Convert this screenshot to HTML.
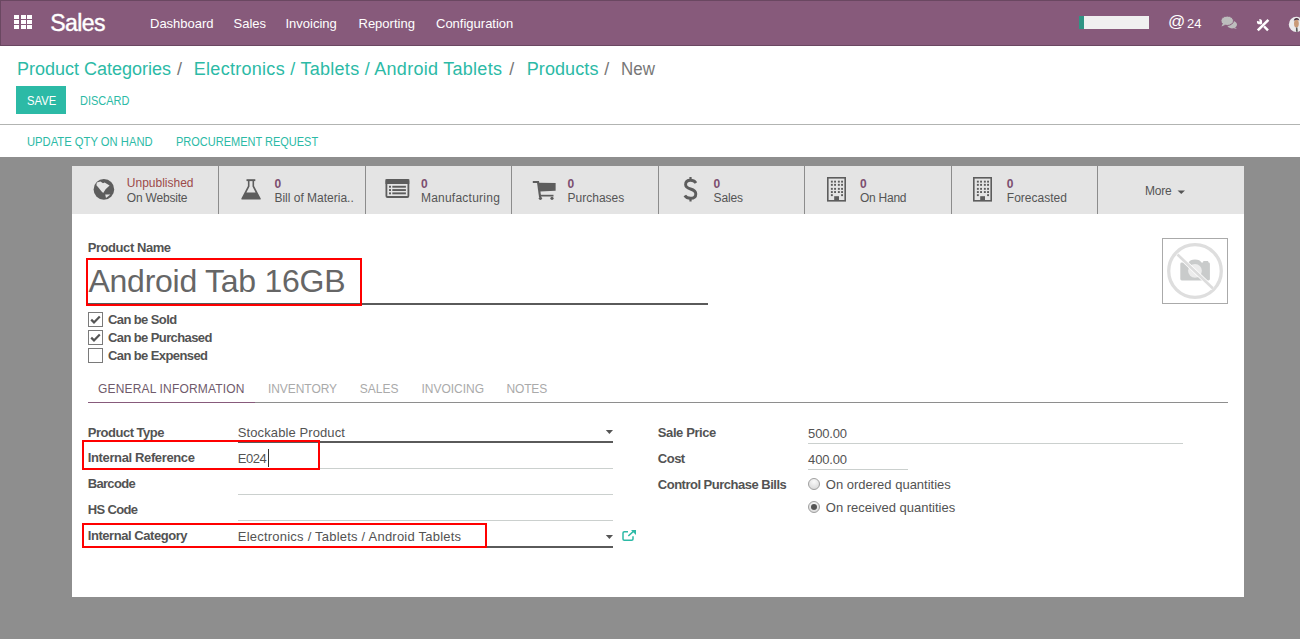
<!DOCTYPE html>
<html><head><meta charset="utf-8">
<style>
*{margin:0;padding:0;box-sizing:border-box}
html,body{width:1300px;height:639px;overflow:hidden;background:#8e8e8e;font-family:"Liberation Sans",sans-serif;color:#4c4c4c;position:relative}
.a{position:absolute;white-space:nowrap}
svg.a{overflow:visible}
</style></head><body>
<div class="a" style="left:0px;top:0px;width:1300px;height:46px;background:#875a7b;border:1px solid #6a4761;border-right:none"></div>
<div class="a" style="left:14.0px;top:15px;width:5px;height:4px;background:#fff;"></div>
<div class="a" style="left:14.0px;top:20px;width:5px;height:4px;background:#fff;"></div>
<div class="a" style="left:14.0px;top:25px;width:5px;height:4px;background:#fff;"></div>
<div class="a" style="left:20.5px;top:15px;width:5px;height:4px;background:#fff;"></div>
<div class="a" style="left:20.5px;top:20px;width:5px;height:4px;background:#fff;"></div>
<div class="a" style="left:20.5px;top:25px;width:5px;height:4px;background:#fff;"></div>
<div class="a" style="left:27.0px;top:15px;width:5px;height:4px;background:#fff;"></div>
<div class="a" style="left:27.0px;top:20px;width:5px;height:4px;background:#fff;"></div>
<div class="a" style="left:27.0px;top:25px;width:5px;height:4px;background:#fff;"></div>
<div class="a" style="left:50.3px;top:12px;font-size:23px;line-height:23px;color:#fff;letter-spacing:-0.6px;-webkit-text-stroke:0.4px #fff;">Sales</div>
<div class="a" style="left:150px;top:17px;font-size:13px;line-height:13px;color:#fff;">Dashboard</div>
<div class="a" style="left:233.5px;top:17px;font-size:13px;line-height:13px;color:#fff;">Sales</div>
<div class="a" style="left:285.5px;top:17px;font-size:13px;line-height:13px;color:#fff;">Invoicing</div>
<div class="a" style="left:358.5px;top:17px;font-size:13px;line-height:13px;color:#fff;">Reporting</div>
<div class="a" style="left:436px;top:17px;font-size:13px;line-height:13px;color:#fff;">Configuration</div>
<div class="a" style="left:1079px;top:16px;width:70px;height:13px;background:#f0f0f0;"></div>
<div class="a" style="left:1079px;top:16px;width:5px;height:13px;background:#2f9484;"></div>

<div class="a" style="left:1168px;top:13px;font-size:17px;line-height:17px;color:#fff">@</div>
<svg class="a" style="left:0;top:0" width="1300" height="46">
 <g fill="#bdbdbd">
  <ellipse cx="1232" cy="24.6" rx="5" ry="3.8"/>
  <path d="M1234.5 27 L1237 29 L1233 28 Z"/>
 </g>
 <g fill="#bdbdbd" stroke="#875a7b" stroke-width="1">
  <ellipse cx="1227.2" cy="20.8" rx="6.3" ry="4.7"/>
 </g>
 <path d="M1222.8 23.5 L1221.5 26.5 L1225.5 24.8 Z" fill="#bdbdbd"/>
 <circle cx="1259.5" cy="21.7" r="2.6" fill="#fff"/>
 <path d="M1259.6 21.8 L1257.0 20.2 L1258.6 18.6 Z" fill="#875a7b"/>
 <circle cx="1258.2" cy="20.0" r="1.25" fill="#875a7b"/>
 <path d="M1259.8 22 L1268 30.3" stroke="#fff" stroke-width="2.4"/>
 <path d="M1261.6 26.4 L1264.2 23.8" stroke="#875a7b" stroke-width="3.4"/>
 <path d="M1257.8 30.3 L1268.4 19.8" stroke="#fff" stroke-width="2.6"/>
 <circle cx="1296.4" cy="24.4" r="7.6" fill="#ebeaec"/>
 <ellipse cx="1296.4" cy="23.6" rx="2.4" ry="3.9" fill="#c99a78"/>
 <path d="M1293.8 21.2 Q1294 18 1296.6 18 Q1299.2 18 1299.2 21 L1298.4 20 Q1296.5 19.4 1294.6 20.2 Z" fill="#4e3444"/>
 <path d="M1295.9 27.4 L1297.4 27.4 L1297.8 31.8 L1296 31.8 Z" fill="#5a5a5a"/>
</svg>

<div class="a" style="left:1187px;top:17px;font-size:13px;line-height:13px;color:#fff;">24</div>
<div class="a" style="left:0px;top:46px;width:1300px;height:111px;background:#fff;"></div>
<div class="a" style="left:17px;top:60px;font-size:18px;line-height:18px;color:#2cbaa6;">Product Categories</div>
<div class="a" style="left:177px;top:60px;font-size:18px;line-height:18px;color:#777;">/</div>
<div class="a" style="left:193.8px;top:60px;font-size:18px;line-height:18px;color:#2cbaa6;letter-spacing:0.28px;">Electronics / Tablets / Android Tablets</div>
<div class="a" style="left:509.2px;top:60px;font-size:18px;line-height:18px;color:#777;">/</div>
<div class="a" style="left:526.7px;top:60px;font-size:18px;line-height:18px;color:#2cbaa6;letter-spacing:0.1px;">Products</div>
<div class="a" style="left:604.2px;top:60px;font-size:18px;line-height:18px;color:#777;">/</div>
<div class="a" style="left:620.6px;top:60px;font-size:18px;line-height:18px;color:#777;transform:scaleX(0.94);transform-origin:0 0;">New</div>
<div class="a" style="left:16px;top:86px;width:50px;height:28px;background:#2cbaa6;"></div>
<div class="a" style="left:26.5px;top:94px;font-size:13px;line-height:13px;color:#fff;transform:scaleX(0.866);transform-origin:0 0;">SAVE</div>
<div class="a" style="left:79.5px;top:94px;font-size:13px;line-height:13px;color:#2cbaa6;transform:scaleX(0.846);transform-origin:0 0;">DISCARD</div>
<div class="a" style="left:0px;top:124px;width:1300px;height:1px;background:#b2b4b2;"></div>
<div class="a" style="left:26.5px;top:135px;font-size:13px;line-height:13px;color:#2cbaa6;transform:scaleX(0.864);transform-origin:0 0;">UPDATE QTY ON HAND</div>
<div class="a" style="left:176.2px;top:135px;font-size:13px;line-height:13px;color:#2cbaa6;transform:scaleX(0.846);transform-origin:0 0;">PROCUREMENT REQUEST</div>
<div class="a" style="left:72px;top:166px;width:1172px;height:431px;background:#fff;"></div>
<div class="a" style="left:72px;top:166px;width:1172px;height:48px;background:#e4e4e4;"></div>
<div class="a" style="left:218px;top:166px;width:1px;height:48px;background:#8c8c8c;"></div>
<div class="a" style="left:365px;top:166px;width:1px;height:48px;background:#8c8c8c;"></div>
<div class="a" style="left:511px;top:166px;width:1px;height:48px;background:#8c8c8c;"></div>
<div class="a" style="left:658px;top:166px;width:1px;height:48px;background:#8c8c8c;"></div>
<div class="a" style="left:804px;top:166px;width:1px;height:48px;background:#8c8c8c;"></div>
<div class="a" style="left:951px;top:166px;width:1px;height:48px;background:#8c8c8c;"></div>
<div class="a" style="left:1097px;top:166px;width:1px;height:48px;background:#8c8c8c;"></div>
<div class="a" style="left:126.8px;top:177px;font-size:12px;line-height:12px;color:#9c4a4a;">Unpublished</div>
<div class="a" style="left:126.8px;top:192px;font-size:12px;line-height:12px;color:#555;letter-spacing:-0.2px;">On Website</div>
<div class="a" style="left:274.4px;top:178px;font-size:12px;line-height:12px;color:#7c4f70;font-weight:bold;">0</div>
<div class="a" style="left:274.4px;top:192px;font-size:12px;line-height:12px;color:#555;">Bill of Materia..</div>
<div class="a" style="left:420.9px;top:178px;font-size:12px;line-height:12px;color:#7c4f70;font-weight:bold;">0</div>
<div class="a" style="left:420.9px;top:192px;font-size:12px;line-height:12px;color:#555;letter-spacing:0.24px;">Manufacturing</div>
<div class="a" style="left:567.6px;top:178px;font-size:12px;line-height:12px;color:#7c4f70;font-weight:bold;">0</div>
<div class="a" style="left:567.6px;top:192px;font-size:12px;line-height:12px;color:#555;">Purchases</div>
<div class="a" style="left:713.5px;top:178px;font-size:12px;line-height:12px;color:#7c4f70;font-weight:bold;">0</div>
<div class="a" style="left:713.5px;top:192px;font-size:12px;line-height:12px;color:#555;letter-spacing:-0.1px;">Sales</div>
<div class="a" style="left:860px;top:178px;font-size:12px;line-height:12px;color:#7c4f70;font-weight:bold;">0</div>
<div class="a" style="left:860px;top:192px;font-size:12px;line-height:12px;color:#555;letter-spacing:-0.25px;">On Hand</div>
<div class="a" style="left:1006.8px;top:178px;font-size:12px;line-height:12px;color:#7c4f70;font-weight:bold;">0</div>
<div class="a" style="left:1006.8px;top:192px;font-size:12px;line-height:12px;color:#555;">Forecasted</div>
<div class="a" style="left:1145px;top:185px;font-size:12px;line-height:12px;color:#555;letter-spacing:-0.25px;">More</div>

<svg class="a" style="left:0;top:0" width="1300" height="220">
 <g fill="#5d5d5d">
  <!-- globe -->
  <circle cx="103.9" cy="189.4" r="10.3"/>
 </g>
 <path d="M96.8 182.6 L100.5 181.4 L103 183.2 L104.6 182.6 L109.6 185.6 L105.6 189.2 L103.2 193 L101.6 191.6 L98.4 187.6 L96.4 185.2 Z" fill="#e4e4e4"/>
 <path d="M105.2 194.4 L110.4 194.6 L106 197.9 Z" fill="#e4e4e4"/>
 <!-- flask -->
 <g fill="#5d5d5d">
  <rect x="246.5" y="179.2" width="8.8" height="1.9"/>
  <path d="M247.9 181 L247.9 186 L241.5 198.3 Q241 199.6 242.4 199.6 L259.8 199.6 Q261.2 199.6 260.6 198.3 L254.1 186 L254.1 181 L252.5 181 L252.5 186.4 L255.6 192.6 L246.4 192.6 L249.5 186.4 L249.5 181 Z"/>
 </g>
 <!-- list-alt -->
 <rect x="386.4" y="180" width="22" height="17" rx="1" fill="none" stroke="#5d5d5d" stroke-width="1.8"/>
 <rect x="385.5" y="179.2" width="23.8" height="4.8" fill="#5d5d5d"/>
 <g fill="#5d5d5d">
  <rect x="389" y="185.8" width="2" height="1.9"/><rect x="392.3" y="185.8" width="13.6" height="1.9"/>
  <rect x="389" y="189.1" width="2" height="1.9"/><rect x="392.3" y="189.1" width="13.6" height="1.9"/>
  <rect x="389" y="192.4" width="2" height="1.9"/><rect x="392.3" y="192.4" width="13.6" height="1.9"/>
 </g>
 <!-- cart -->
 <g fill="#5d5d5d">
  <rect x="532.8" y="181" width="5.8" height="2"/>
  <path d="M536.8 181 L539 181 L541.2 197 L539 197 Z"/>
  <path d="M538.6 182.8 L555.6 183 L555.6 190.8 L539.8 191.6 Z"/>
  <rect x="539.5" y="194.8" width="14" height="1.7"/>
  <circle cx="540.4" cy="198.3" r="1.6"/><circle cx="552" cy="198.3" r="1.6"/>
 </g>
 <!-- building -->
 <rect x="827.8" y="177.8" width="17.4" height="23" fill="none" stroke="#5d5d5d" stroke-width="1.6"/>
 <rect x="830.9" y="180.7" width="1.9" height="1.9" fill="#5d5d5d"/>
 <rect x="834.1" y="180.7" width="1.9" height="1.9" fill="#5d5d5d"/>
 <rect x="837.9" y="180.7" width="1.9" height="1.9" fill="#5d5d5d"/>
 <rect x="841.1" y="180.7" width="1.9" height="1.9" fill="#5d5d5d"/>
 <rect x="830.9" y="183.9" width="1.9" height="1.9" fill="#5d5d5d"/>
 <rect x="834.1" y="183.9" width="1.9" height="1.9" fill="#5d5d5d"/>
 <rect x="837.9" y="183.9" width="1.9" height="1.9" fill="#5d5d5d"/>
 <rect x="841.1" y="183.9" width="1.9" height="1.9" fill="#5d5d5d"/>
 <rect x="830.9" y="187.9" width="1.9" height="1.9" fill="#5d5d5d"/>
 <rect x="834.1" y="187.9" width="1.9" height="1.9" fill="#5d5d5d"/>
 <rect x="837.9" y="187.9" width="1.9" height="1.9" fill="#5d5d5d"/>
 <rect x="841.1" y="187.9" width="1.9" height="1.9" fill="#5d5d5d"/>
 <rect x="830.9" y="191.1" width="1.9" height="1.9" fill="#5d5d5d"/>
 <rect x="834.1" y="191.1" width="1.9" height="1.9" fill="#5d5d5d"/>
 <rect x="837.9" y="191.1" width="1.9" height="1.9" fill="#5d5d5d"/>
 <rect x="841.1" y="191.1" width="1.9" height="1.9" fill="#5d5d5d"/>
 <rect x="830.9" y="194.2" width="1.9" height="1.9" fill="#5d5d5d"/>
 <rect x="841.1" y="194.2" width="1.9" height="1.9" fill="#5d5d5d"/>
 <rect x="834.2" y="196.2" width="4.8" height="4.5" fill="#5d5d5d"/>
 <rect x="973.8" y="177.8" width="17.4" height="23" fill="none" stroke="#5d5d5d" stroke-width="1.6"/>
 <rect x="976.9" y="180.7" width="1.9" height="1.9" fill="#5d5d5d"/>
 <rect x="980.1" y="180.7" width="1.9" height="1.9" fill="#5d5d5d"/>
 <rect x="983.9" y="180.7" width="1.9" height="1.9" fill="#5d5d5d"/>
 <rect x="987.1" y="180.7" width="1.9" height="1.9" fill="#5d5d5d"/>
 <rect x="976.9" y="183.9" width="1.9" height="1.9" fill="#5d5d5d"/>
 <rect x="980.1" y="183.9" width="1.9" height="1.9" fill="#5d5d5d"/>
 <rect x="983.9" y="183.9" width="1.9" height="1.9" fill="#5d5d5d"/>
 <rect x="987.1" y="183.9" width="1.9" height="1.9" fill="#5d5d5d"/>
 <rect x="976.9" y="187.9" width="1.9" height="1.9" fill="#5d5d5d"/>
 <rect x="980.1" y="187.9" width="1.9" height="1.9" fill="#5d5d5d"/>
 <rect x="983.9" y="187.9" width="1.9" height="1.9" fill="#5d5d5d"/>
 <rect x="987.1" y="187.9" width="1.9" height="1.9" fill="#5d5d5d"/>
 <rect x="976.9" y="191.1" width="1.9" height="1.9" fill="#5d5d5d"/>
 <rect x="980.1" y="191.1" width="1.9" height="1.9" fill="#5d5d5d"/>
 <rect x="983.9" y="191.1" width="1.9" height="1.9" fill="#5d5d5d"/>
 <rect x="987.1" y="191.1" width="1.9" height="1.9" fill="#5d5d5d"/>
 <rect x="976.9" y="194.2" width="1.9" height="1.9" fill="#5d5d5d"/>
 <rect x="987.1" y="194.2" width="1.9" height="1.9" fill="#5d5d5d"/>
 <rect x="980.2" y="196.2" width="4.8" height="4.5" fill="#5d5d5d"/>
 <!-- dollar -->
 <path d="M690.5 177 L690.5 181 M690.5 197.5 L690.5 201.5" stroke="#5d5d5d" stroke-width="2.2"/>
 <path d="M696 183 Q694 180.3 690.5 180.3 Q685.6 180.3 685.6 184.5 Q685.6 187.5 690.5 189 Q695.8 190.6 695.8 194 Q695.8 198.3 690.5 198.3 Q686.5 198.3 684.8 195.5" fill="none" stroke="#5d5d5d" stroke-width="2.9"/>
 <!-- caret -->
 <path d="M1177.5 190.5 L1185 190.5 L1181.25 194 Z" fill="#555"/>
</svg>

<div class="a" style="left:87.7px;top:241px;font-size:13px;line-height:13px;color:#535353;font-weight:bold;letter-spacing:-0.43px;">Product Name</div>
<div class="a" style="left:88.5px;top:265px;font-size:32px;line-height:32px;color:#666;letter-spacing:-0.26px;">Android Tab 16GB</div>
<div class="a" style="left:88px;top:303px;width:620px;height:2px;background:#5a5a5a;"></div>
<div class="a" style="left:86px;top:258px;width:276px;height:48px;border:2px solid #ff0000"></div>
<div class="a" style="left:88px;top:312px;width:15px;height:15px;background:#fff;border:1px solid #7a7a7a"></div>
<svg class="a" style="left:88px;top:312px" width="15" height="15" viewBox="0 0 15 15"><path d="M3.2 7.6 L6 10.4 L11.8 4.4" fill="none" stroke="#555" stroke-width="2.2"/></svg>
<div class="a" style="left:108px;top:313px;font-size:13px;line-height:13px;color:#535353;font-weight:bold;letter-spacing:-0.6px;">Can be Sold</div>
<div class="a" style="left:88px;top:330px;width:15px;height:15px;background:#fff;border:1px solid #7a7a7a"></div>
<svg class="a" style="left:88px;top:330px" width="15" height="15" viewBox="0 0 15 15"><path d="M3.2 7.6 L6 10.4 L11.8 4.4" fill="none" stroke="#555" stroke-width="2.2"/></svg>
<div class="a" style="left:108px;top:331px;font-size:13px;line-height:13px;color:#535353;font-weight:bold;letter-spacing:-0.6px;">Can be Purchased</div>
<div class="a" style="left:88px;top:348px;width:15px;height:15px;background:#fff;border:1px solid #7a7a7a"></div>
<div class="a" style="left:108px;top:349px;font-size:13px;line-height:13px;color:#535353;font-weight:bold;letter-spacing:-0.6px;">Can be Expensed</div>
<div class="a" style="left:98px;top:383px;font-size:12px;line-height:12px;color:#6f5a6b;letter-spacing:0.17px;">GENERAL INFORMATION</div>
<div class="a" style="left:267.9px;top:383px;font-size:12px;line-height:12px;color:#aaa;letter-spacing:-0.05px;">INVENTORY</div>
<div class="a" style="left:359.8px;top:383px;font-size:12px;line-height:12px;color:#aaa;">SALES</div>
<div class="a" style="left:421.4px;top:383px;font-size:12px;line-height:12px;color:#aaa;">INVOICING</div>
<div class="a" style="left:506.6px;top:383px;font-size:12px;line-height:12px;color:#aaa;letter-spacing:-0.2px;">NOTES</div>
<div class="a" style="left:88px;top:402px;width:1140px;height:1px;background:#8e8e8e;"></div>
<div class="a" style="left:88px;top:402px;width:167px;height:1px;background:#875a7b;"></div>
<div class="a" style="left:87.8px;top:426px;font-size:13px;line-height:13px;color:#535353;font-weight:bold;letter-spacing:-0.49px;">Product Type</div>
<div class="a" style="left:237.8px;top:426px;font-size:13px;line-height:13px;color:#535353;letter-spacing:0.1px;">Stockable Product</div>
<div class="a" style="left:87.8px;top:451px;font-size:13px;line-height:13px;color:#535353;font-weight:bold;letter-spacing:-0.37px;">Internal Reference</div>
<div class="a" style="left:237.8px;top:452px;font-size:13px;line-height:13px;color:#535353;letter-spacing:-0.5px;">E024</div>
<div class="a" style="left:87.8px;top:477px;font-size:13px;line-height:13px;color:#535353;font-weight:bold;letter-spacing:-0.7px;">Barcode</div>
<div class="a" style="left:87.8px;top:503px;font-size:13px;line-height:13px;color:#535353;font-weight:bold;letter-spacing:-0.68px;">HS Code</div>
<div class="a" style="left:87.8px;top:529px;font-size:13px;line-height:13px;color:#535353;font-weight:bold;letter-spacing:-0.45px;">Internal Category</div>
<div class="a" style="left:237.8px;top:530px;font-size:13px;line-height:13px;color:#535353;letter-spacing:0.22px;">Electronics / Tablets / Android Tablets</div>
<div class="a" style="left:238px;top:441px;width:375px;height:2px;background:#5a5a5a;"></div>
<div class="a" style="left:238px;top:468px;width:375px;height:1px;background:#cbd0ce;"></div>
<div class="a" style="left:238px;top:494px;width:375px;height:1px;background:#cbd0ce;"></div>
<div class="a" style="left:238px;top:520px;width:375px;height:1px;background:#cbd0ce;"></div>
<div class="a" style="left:238px;top:546px;width:375px;height:2px;background:#5a5a5a;"></div>
<div class="a" style="left:268px;top:449px;width:1px;height:18px;background:#333;"></div>

<div class="a" style="left:1162px;top:238px;width:66px;height:66px;border:1px solid #aaa;background:#fff"></div>
<svg class="a" style="left:0;top:0" width="1300" height="600">
 <circle cx="1195" cy="271" r="26.3" fill="none" stroke="#dedede" stroke-width="3.3"/>
 <path d="M1180.3 264 Q1180.3 262.6 1181.8 262.6 L1188.6 262.6 Q1190 259.4 1195 259.4 Q1200 259.4 1201.4 262.6 L1203 262.6 L1203.4 261 L1208 261 L1208.6 262.6 Q1209.9 262.6 1209.9 264 L1209.9 279 Q1209.9 280.4 1208.4 280.4 L1181.8 280.4 Q1180.3 280.4 1180.3 279 Z" fill="#c9cbcb"/>
 <circle cx="1195" cy="270.8" r="6.9" fill="#ececec"/>
 <path d="M1177.5 254.5 L1213 288.5" stroke="#fff" stroke-width="4.2"/>
 <path d="M1177.5 254.5 L1213 288.5" stroke="#dcdcdc" stroke-width="2.6"/>
 <!-- dropdown arrows -->
 <path d="M605.8 430 L613 430 L609.4 434 Z" fill="#555"/>
 <path d="M605.8 535 L613 535 L609.4 539 Z" fill="#555"/>
 <!-- external link -->
 <g fill="none" stroke="#2cbaa6" stroke-width="1.5">
  <path d="M628 531.8 L624.3 531.8 Q623 531.8 623 533 L623 539 Q623 540.2 624.3 540.2 L631.7 540.2 Q633 540.2 633 539 L633 536.2"/>
  <path d="M628.3 536 L634.2 530.6"/>
 </g>
 <path d="M631 530 L636 530 L636 535 Z" fill="#2cbaa6"/>
</svg>

<div class="a" style="left:82px;top:440px;width:238px;height:30px;border:2px solid #ff0000"></div>
<div class="a" style="left:82px;top:523px;width:405px;height:25px;border:2px solid #ff0000"></div>
<div class="a" style="left:657.8px;top:426px;font-size:13px;line-height:13px;color:#535353;font-weight:bold;letter-spacing:-0.4px;">Sale Price</div>
<div class="a" style="left:808.1px;top:427px;font-size:13px;line-height:13px;color:#535353;letter-spacing:-0.18px;">500.00</div>
<div class="a" style="left:808px;top:443px;width:375px;height:1px;background:#cbd0ce;"></div>
<div class="a" style="left:657.8px;top:452px;font-size:13px;line-height:13px;color:#535353;font-weight:bold;letter-spacing:-0.5px;">Cost</div>
<div class="a" style="left:808.1px;top:453px;font-size:13px;line-height:13px;color:#535353;letter-spacing:-0.18px;">400.00</div>
<div class="a" style="left:808px;top:469px;width:100px;height:1px;background:#cbd0ce;"></div>
<div class="a" style="left:657.8px;top:478px;font-size:13px;line-height:13px;color:#535353;font-weight:bold;letter-spacing:-0.5px;">Control Purchase Bills</div>
<div class="a" style="left:825.8px;top:478px;font-size:13px;line-height:13px;color:#535353;">On ordered quantities</div>
<div class="a" style="left:825.8px;top:501px;font-size:13px;line-height:13px;color:#535353;">On received quantities</div>

<svg class="a" style="left:0;top:0" width="1300" height="600">
 <defs><radialGradient id="rg" cx="0.5" cy="0.3" r="0.7"><stop offset="0" stop-color="#fafafa"/><stop offset="1" stop-color="#d8d8d8"/></radialGradient></defs>
 <circle cx="814" cy="484" r="5.5" fill="url(#rg)" stroke="#a0a0a0" stroke-width="1"/>
 <circle cx="814" cy="507" r="5.5" fill="url(#rg)" stroke="#a0a0a0" stroke-width="1"/>
 <circle cx="814" cy="507" r="3" fill="#555"/>
</svg>

</body></html>
